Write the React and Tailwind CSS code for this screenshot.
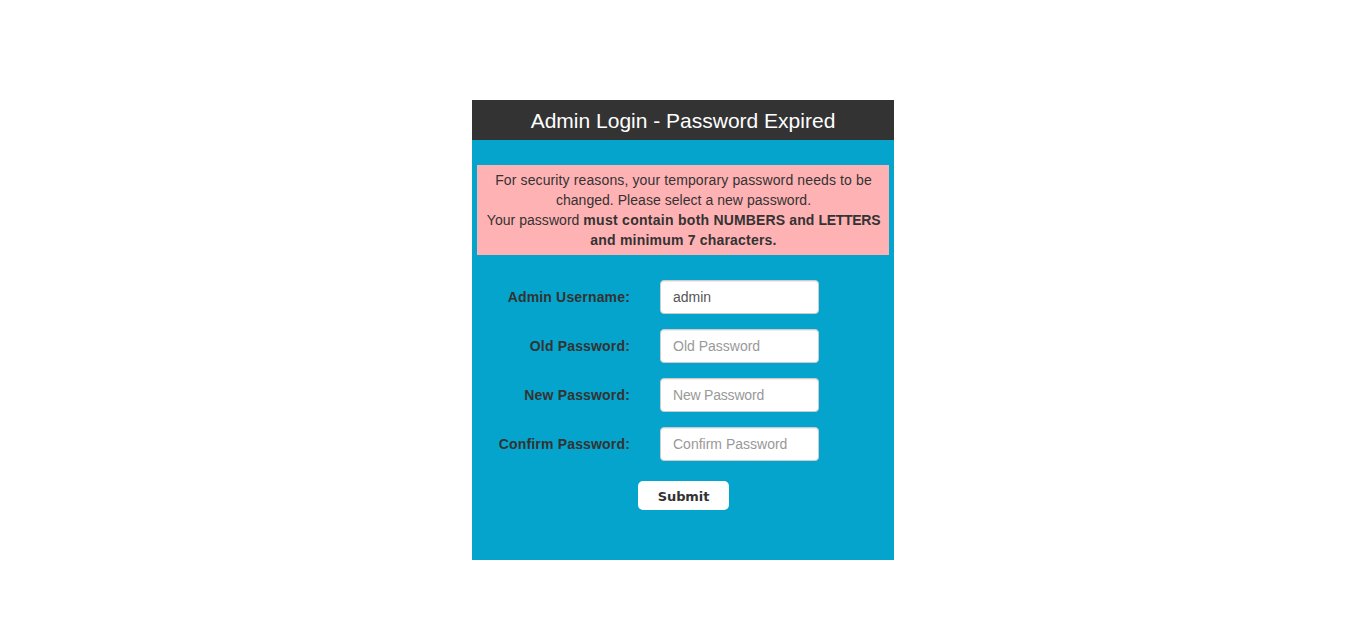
const fields = [
  { id: "username", label: "Admin Username:", placeholder: "Admin Username", value: "admin", type: "text", tracking: "" },
  { id: "old", label: "Old Password:", placeholder: "Old Password", type: "password", tracking: "" },
  { id: "new", label: "New Password:", placeholder: "New Password", type: "password", tracking: "tracking-[-0.2px]" },
  { id: "confirm", label: "Confirm Password:", placeholder: "Confirm Password", type: "password", tracking: "" },
];

export default function App() {
  return (
    <div className="flex min-h-[636px] justify-center bg-white pt-[100px] font-['Liberation_Sans',Arial,sans-serif] text-[14px] leading-5 text-[#333]">
      <main className="h-[460px] w-[422px] bg-[#05a4cc]">
        <h1 className="h-10 bg-[#333] pt-px text-center text-[21px] leading-10 text-white">
          Admin Login - Password Expired
        </h1>
        <p className="mx-[5px] mt-[25px] h-[90px] bg-[#ffb2b4] py-[5px] pr-[5px] pl-1.5 text-center whitespace-nowrap">
          <span className="tracking-[0.125px]">For security reasons, your temporary password needs to be</span>
          <br />
          <span className="tracking-[0.04px]">changed. Please select a new password.</span>
          <br />
          <span className="tracking-[0.04px]">Your password </span>
          <b className="tracking-[0.12px]">
            <span className="tracking-[0.28px]">must contain both </span>NUMBERS and{" "}
            <span className="tracking-[-0.3px]">LETTERS</span>
          </b>
          <br />
          <b className="tracking-[0.2px]">and minimum 7 characters.</b>
        </p>
        <form className="mt-[25px] flex flex-col gap-[15px]">
          {fields.map((f) => (
            <div key={f.id} className="flex h-[34px]">
              <label htmlFor={f.id} className="w-[158px] pt-[7px] text-right font-bold tracking-[0.17px]">
                {f.label}
              </label>
              <input
                id={f.id}
                type={f.type}
                defaultValue={f.value}
                placeholder={f.placeholder}
                className={`ml-[30px] h-[34px] w-[159px] rounded-[4px] border border-[#ccc] bg-white px-3 py-1.5 text-[14px] text-[#555] shadow-[inset_0_1px_1px_rgba(0,0,0,0.075)] outline-none placeholder:text-[#999] ${f.tracking}`}
              />
            </div>
          ))}
          <button
            type="button"
            className="mt-[5px] ml-[166px] h-[29px] w-[91px] rounded-[5px] bg-white pt-[3px] font-['DejaVu_Sans',Verdana,sans-serif] text-[13px] leading-5 font-bold tracking-[-0.1px] text-[#333]"
          >
            Submit
          </button>
        </form>
      </main>
    </div>
  );
}
